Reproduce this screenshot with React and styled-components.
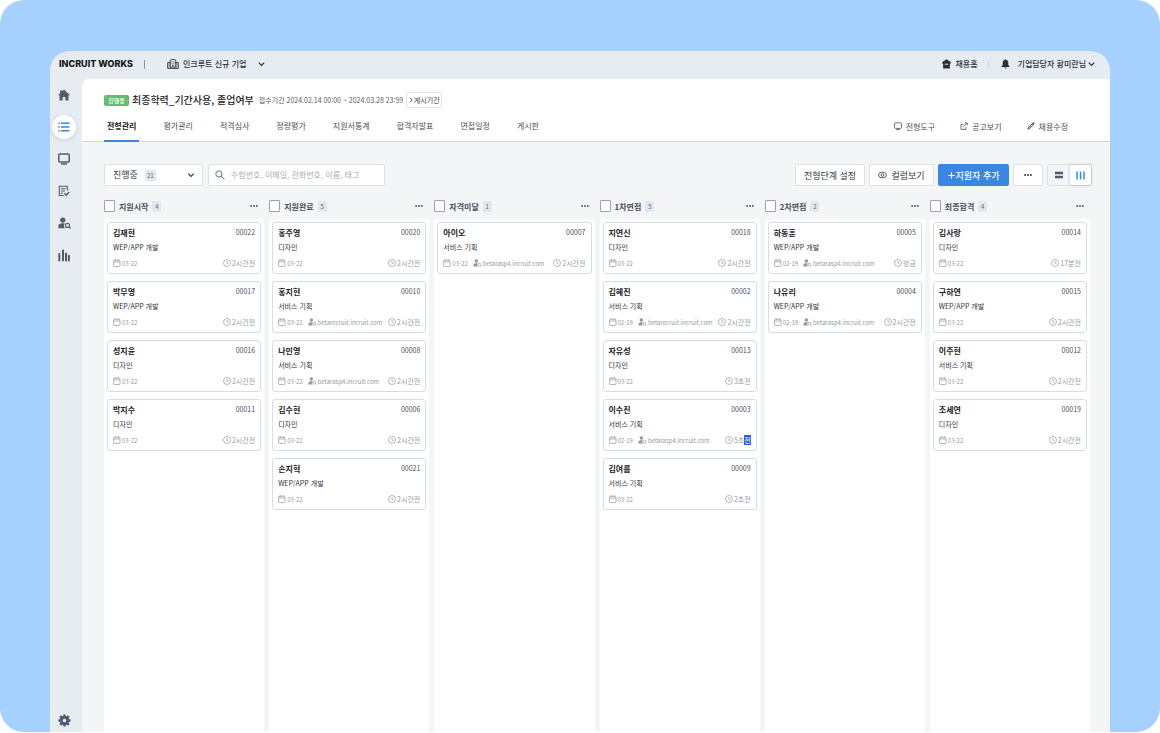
import React from "react";
import styled, { createGlobalStyle, css } from "styled-components";

const GlobalStyle = createGlobalStyle`
  *, *::before, *::after { box-sizing: border-box; }
  body {
    margin: 0;
    background: #fff;
    color: #333a45;
    font-family: "Noto Sans CJK KR", "Noto Sans", sans-serif;
    font-size: 8px;
  }
  button, input, select { font: inherit; color: inherit; margin: 0; }
  button { cursor: pointer; }
  a { color: inherit; text-decoration: none; }
  h1, h2, h3, p, ul { margin: 0; padding: 0; }
  ul { list-style: none; }
  svg { display: block; flex: none; }
`;

const Backdrop = styled.div`
  display: flex;
  min-height: calc(100vh - 1px);
  padding: 51px 50px 0;
  border-radius: 24px;
  background: #a6d1ff;
`;

const Window = styled.div`
  flex: 1;
  min-width: 0;
  display: flex;
  flex-direction: column;
  border-radius: 20px 20px 0 0;
  background: #e7ecf0;
  overflow: hidden;
`;

const TopBar = styled.header`
  display: flex;
  align-items: center;
  justify-content: space-between;
  height: 28px;
  padding: 0 15px 2px 9px;
`;

const TopGroup = styled.div`
  display: flex;
  align-items: center;
`;

const Logo = styled.a`
  min-width: 75px;
  font-family: Inter, sans-serif;
  font-size: 9px;
  font-weight: 800;
  line-height: 14px;
  white-space: nowrap;
  color: #15171b;
`;

const Divider = styled.span`
  width: 1px;
  height: 9px;
  margin: ${(p) => p.$margin};
  background: ${(p) => p.$color};
`;

const PlainButton = styled.button`
  display: flex;
  align-items: center;
  gap: ${(p) => p.$gap || 4}px;
  padding: 0;
  border: 0;
  background: none;
  font-size: 8px;
  font-weight: 500;
  line-height: 12px;
  white-space: nowrap;
  color: ${(p) => (p.$muted ? "#535a6e" : "#2b303a")};
`;

const TopLink = styled.a`
  display: flex;
  align-items: center;
  gap: 4px;
  font-weight: 500;
  line-height: 12px;
  color: #2b303a;
`;

const CompanyPicker = styled.div`
  display: flex;
  align-items: center;
  gap: 12px;
`;

const Account = styled.div`
  display: flex;
  align-items: center;
  gap: 2px;
`;

const Body = styled.div`
  flex: 1;
  display: flex;
`;

const Sidebar = styled.nav`
  flex: none;
  display: flex;
  flex-direction: column;
  gap: 8px;
  width: 32px;
  padding: 4px 0 0 2px;
  color: #535a6e;
`;

const SideLink = styled.a`
  display: flex;
  align-items: center;
  justify-content: center;
  width: 24px;
  height: 24px;
  border-radius: 50%;
  ${(p) => p.$active && css`
    background: #fff;
    color: #3a86e0;
    box-shadow: 0 1px 4px rgba(60, 80, 110, 0.2);
  `}
  ${(p) => p.$last && css`margin-top: auto;`}
`;

const Main = styled.main`
  flex: 1;
  min-width: 0;
  display: flex;
  flex-direction: column;
  border-top-left-radius: 8px;
  background: #f3f5f7;
  overflow: hidden;
`;

const PageHead = styled.div`
  padding: 13px 42px 0 22px;
  border-bottom: 1px solid #cfd8df;
  background: #fff;
`;

const TitleRow = styled.div`
  display: flex;
  align-items: center;
  height: 16px;
`;

const Status = styled.span`
  width: 25px;
  margin-right: 3px;
  border-radius: 2px;
  background: #66bb74;
  color: #fff;
  font-size: 6px;
  font-weight: 500;
  line-height: 11px;
  text-align: center;
`;

const Title = styled.h1`
  margin-right: 5px;
  font-size: 10px;
  font-weight: 500;
  line-height: 16px;
  white-space: nowrap;
  color: #1d2026;
`;

const Period = styled.span`
  margin-right: 3px;
  font-size: 7px;
  white-space: nowrap;
  color: #555b66;
`;

const PeriodButton = styled.button`
  display: flex;
  align-items: center;
  justify-content: center;
  gap: 1px;
  width: 36px;
  height: 16px;
  padding: 0;
  border: 1px solid #dfe4e8;
  border-radius: 3px;
  background: #fff;
  font-size: 7px;
  white-space: nowrap;
`;

const TabRow = styled.div`
  display: flex;
  justify-content: space-between;
  height: 33px;
`;

const Tabs = styled.nav`
  display: flex;
  gap: 21px;
`;

const Tab = styled.a`
  margin-bottom: -1px;
  padding: 10px 3px 0;
  border-bottom: 2px solid ${(p) => (p.$active ? "#3a86e0" : "transparent")};
  font-weight: ${(p) => (p.$active ? 700 : 400)};
  line-height: 16px;
  white-space: nowrap;
  color: ${(p) => (p.$active ? "#1d2026" : "#4b515c")};
`;

const Tools = styled.div`
  display: flex;
  gap: 25px;
`;

const ToolLink = styled.a`
  display: flex;
  align-items: center;
  gap: 4px;
  height: 16px;
  margin-top: 10px;
  white-space: nowrap;
  color: #4b515c;
`;

const Content = styled.div`
  flex: 1;
  display: flex;
  flex-direction: column;
  gap: 7px;
  padding: 22px 18px 0 22px;
`;

const Toolbar = styled.div`
  display: flex;
  justify-content: space-between;
`;

const ToolbarGroup = styled.div`
  display: flex;
  gap: ${(p) => p.$gap}px;
`;

const fieldBox = css`
  display: flex;
  align-items: center;
  height: 22px;
  border: 1px solid #dbe1e6;
  border-radius: 2px;
  background: #fff;
`;

const FilterBox = styled.label`
  ${fieldBox}
  width: 99px;
  padding: 0 7px 0 8px;
  svg { margin-left: auto; }
`;

const FilterSelect = styled.select`
  appearance: none;
  margin-right: 7px;
  padding: 0;
  border: 0;
  background: none;
  font-size: 9px;
  line-height: 16px;
`;

const SearchBox = styled.label`
  ${fieldBox}
  width: 177px;
  gap: 6px;
  padding: 0 6px;
  color: #6b7280;
`;

const SearchInput = styled.input`
  flex: 1;
  min-width: 0;
  padding: 0;
  border: 0;
  outline: 0;
  background: none;
  line-height: 16px;
  &::placeholder { color: #a9aeb6; opacity: 1; }
`;

const Count = styled.span`
  min-width: 9px;
  padding: 0 2px;
  border-radius: 1px;
  background: #e1e7ec;
  font-size: 6px;
  font-weight: 400;
  line-height: 11px;
  text-align: center;
  color: #5c6370;
`;

const ActionButton = styled.button`
  ${fieldBox}
  justify-content: center;
  gap: ${(p) => p.$gap || 0}px;
  width: ${(p) => p.$width}px;
  padding: 0;
  font-size: 9px;
  white-space: nowrap;
  ${(p) => p.$primary && css`
    border-color: #3a86e0;
    background: #3a86e0;
    color: #fff;
    font-weight: 500;
  `}
`;

const ViewSwitch = styled.div`
  ${fieldBox}
  width: 45px;
  background: #f3f5f7;
`;

const ViewButton = styled.button`
  flex: 1;
  display: flex;
  align-items: center;
  justify-content: center;
  height: 20px;
  padding: 0;
  border: 0;
  border-radius: 2px;
  background: ${(p) => (p.$active ? "#fff" : "none")};
  color: ${(p) => (p.$active ? "#3a86e0" : "#535a6e")};
  box-shadow: ${(p) => (p.$active ? "0 0 3px rgba(60, 70, 90, 0.35)" : "none")};
`;

const Board = styled.div`
  flex: 1;
  display: grid;
  grid-template-columns: repeat(6, minmax(0, 1fr));
  column-gap: 5px;
  padding-right: 2px;
`;

const Column = styled.section`
  display: flex;
  flex-direction: column;
`;

const ColumnHead = styled.div`
  display: flex;
  align-items: center;
  height: 26px;
  padding-right: 6px;
  color: #4b515e;
`;

const ColumnTitle = styled.label`
  display: flex;
  align-items: center;
  gap: 4px;
  margin-right: auto;
  font-weight: 700;
  white-space: nowrap;
`;

const Check = styled.input`
  appearance: none;
  width: 11px;
  height: 12px;
  border: 1px solid #9aa1b0;
  border-radius: 1px;
  background: #fff;
`;

const CardList = styled.ul`
  flex: 1;
  display: flex;
  flex-direction: column;
  gap: 7px;
  padding: 3px;
  border-radius: 2px 2px 0 0;
  background: #fff;
`;

const CardItem = styled.li`
  padding: 1px 5px;
  border: 1px solid #d6dde3;
  border-radius: 3px;
  background: #fff;
`;

const CardTop = styled.div`
  display: flex;
  align-items: center;
  justify-content: space-between;
  height: 16px;
  font-size: 7px;
  color: #4b515c;
`;

const Name = styled.h3`
  font-size: 8px;
  font-weight: 700;
  color: #1d2026;
`;

const Role = styled.p`
  font-size: 7px;
  line-height: 14px;
  color: #2b303a;
`;

const Meta = styled.div`
  display: flex;
  align-items: center;
  gap: 5px;
  height: 18px;
  white-space: nowrap;
  color: #94989f;
`;

const MetaPart = styled.span`
  display: flex;
  align-items: center;
  gap: 1px;
  font-size: ${(p) => p.$size}px;
  ${(p) => p.$end && css`margin-left: auto;`}
`;

const Selected = styled.mark`
  background: #2f62d9;
  color: #fff;
`;

function Svg({ w, h = w, box, children }) {
  return (
    <svg width={w} height={h} viewBox={box} fill="none" stroke="currentColor" aria-hidden="true">
      {children}
    </svg>
  );
}

const Chevron = ({ w = 7 }) => (
  <Svg w={w} h={6} box="0 0 7 6"><path d="M.8 1.6 3.5 4.3 6.2 1.6" strokeWidth="1.2" /></Svg>
);
const Dots = () => (
  <Svg w={8} h={4} box="0 0 8 4">
    <g fill="currentColor" stroke="none">
      <circle cx="1.1" cy="2" r="1" /><circle cx="4" cy="2" r="1" /><circle cx="6.9" cy="2" r="1" />
    </g>
  </Svg>
);
const HomeIcon = () => (
  <Svg w={12} box="0 0 12 12"><path d="M6 .4 12 6.2H10.5v5.4H7.3V8H4.7v3.6H1.5V6.2H0L2.2 4V1.3h1.6v1.2z" fill="currentColor" stroke="none" /></Svg>
);
const ListIcon = () => (
  <Svg w={12} h={10} box="0 0 12 10"><path d="M3 1.3h8.5M3 5h8.5M3 8.7h8.5" strokeWidth="1.5" /><path d="M.3 1.3h1.5M.3 5h1.5M.3 8.7h1.5" strokeWidth="1.5" /></Svg>
);
const MonitorIcon = () => (
  <Svg w={12} box="0 0 12 12"><rect x=".8" y=".9" width="10.4" height="8" rx="1" strokeWidth="1.5" /><path d="M3 11h6" strokeWidth="1.6" /></Svg>
);
const NoteIcon = () => (
  <Svg w={12} box="0 0 12 12"><path d="M9.3 5.4V1.2H1.3v9.3H5.6M3 3.8h4.5M3 6h3.8M3 8.2h2" strokeWidth="1.1" /><path d="m6.4 8.3 1.8 1.9 3-3.2" strokeWidth="1.4" /></Svg>
);
const PersonSearchIcon = ({ w = 13 }) => (
  <Svg w={w} h={w === 13 ? 12 : 8} box="0 0 13 12">
    <g fill="currentColor" stroke="none">
      <circle cx="4.8" cy="3" r="2.6" />
      <path d="M.4 11.2V8.8C.4 7.2 2.2 6.2 4.7 6.2c.9 0 1.6.1 2.2.4a3.4 3.4 0 0 0 .2 4.6z" />
    </g>
    <circle cx="9.5" cy="8.4" r="2" strokeWidth="1.1" />
    <path d="m10.9 9.8 1.7 1.7" strokeWidth="1.2" />
  </Svg>
);
const BarsIcon = () => (
  <Svg w={12} h={13} box="0 0 12 13"><path d="M1.3 5v6.5M5 1.4v10.1M8 4.4v7.1M10.9 6.8v4.7" strokeWidth="2" strokeLinecap="round" /></Svg>
);
const GearIcon = () => (
  <Svg w={13} box="0 0 13 13">
    <circle cx="6.5" cy="6.5" r="3.3" strokeWidth="3" />
    <path d="M6.5 .4v2M6.5 10.6v2M.4 6.5h2M10.6 6.5h2M2.2 2.2l1.4 1.4M9.4 9.4l1.4 1.4M2.2 10.8l1.4-1.4M9.4 3.6l1.4-1.4" strokeWidth="2.4" />
  </Svg>
);
const BuildingIcon = () => (
  <Svg w={12} h={10} box="0 0 12 10">
    <path d="M3.2 9.4V1.2c1.8-.9 3.8-.9 5.6 0v8.2M3.2 3.6H.7v5.8h10.6V3.6H8.8" strokeWidth=".9" />
    <path d="M4.5 3h1M6.6 3h1M4.5 4.8h1M6.6 4.8h1M1.6 5.2h1M1.6 7.2h1M9.4 5.2h1M9.4 7.2h1M5 9.4V6.8h2v2.6" strokeWidth=".9" />
  </Svg>
);
const StoreIcon = () => (
  <Svg w={9} h={10} box="0 0 9 10"><path d="M4.5.3 8.7 3v1.7H7.9v4.8H1.1V4.7H.3V3z" fill="currentColor" stroke="none" /><path d="M2.8 5.2h3.4" stroke="#e7ecf0" strokeWidth="1" /></Svg>
);
const BellIcon = () => (
  <Svg w={9} h={10} box="0 0 9 10"><path d="M4.5.3c.5 0 .8.3.8.7 1.3.3 2 1.4 2 2.8v2.3l1.2 1.4v.5h-8v-.5l1.2-1.4V3.8c0-1.4.7-2.5 2-2.8 0-.4.3-.7.8-.7zM3.5 8.5h2c0 .6-.4 1-1 1s-1-.4-1-1z" fill="currentColor" stroke="none" /></Svg>
);
const ScreenIcon = () => (
  <Svg w={8} box="0 0 8 8"><rect x=".5" y=".8" width="7" height="5.6" rx="1" strokeWidth=".8" /><path d="M2.3 7.5h3.4" strokeWidth=".9" /></Svg>
);
const ShareIcon = () => (
  <Svg w={8} box="0 0 8 8"><path d="M3.4 2.4H1v5h5V5M4.6.9h2.6v2.6M7 1.1 3.4 4.9" strokeWidth=".8" /></Svg>
);
const PencilIcon = () => (
  <Svg w={8} box="0 0 8 8"><path d="m.4 7.8.5-2.2L5.7.8c.5-.5 1.1-.4 1.5 0s.4 1 0 1.5L2.5 7.1z" fill="currentColor" stroke="none" /><path d="M1.8 6.3 5.6 2.4" stroke="#fff" strokeWidth=".7" /></Svg>
);
const SearchIcon = () => (
  <Svg w={10} box="0 0 10 10"><circle cx="3.9" cy="3.9" r="3.1" strokeWidth="1" /><path d="m6.2 6.2 3.3 3.3" strokeWidth="1" /></Svg>
);
const EyeIcon = () => (
  <Svg w={9} h={8} box="0 0 9 8"><ellipse cx="4.5" cy="4" rx="4" ry="2.9" strokeWidth=".8" /><circle cx="4.5" cy="4" r="1.4" strokeWidth=".8" /></Svg>
);
const PlusIcon = () => (
  <Svg w={7} box="0 0 7 7"><path d="M3.5.3v6.4M.3 3.5h6.4" strokeWidth="1.1" /></Svg>
);
const RowsIcon = () => (
  <Svg w={8} box="0 0 8 8"><path d="M0 2h8M0 6h8" strokeWidth="2.6" /></Svg>
);
const ColumnsIcon = () => (
  <Svg w={9} box="0 0 9 9"><path d="M1 .5v8M4.5.5v8M8 .5v8" strokeWidth="1.5" /></Svg>
);
const CalendarIcon = () => (
  <Svg w={8} box="0 0 8 8"><rect x=".6" y="1.3" width="6.4" height="6.2" rx=".6" strokeWidth=".7" /><path d="M.6 3h6.4M2.2 0v1.6M5.4 0v1.6" strokeWidth=".7" /></Svg>
);
const ClockIcon = () => (
  <Svg w={8} box="0 0 8 8"><circle cx="4" cy="4" r="3.5" strokeWidth=".7" /><path d="M4 2v2.3h1.6" strokeWidth=".7" /></Svg>
);
const AngleIcon = () => (
  <Svg w={4} h={6} box="0 0 4 6"><path d="M.7.7 3.2 3 .7 5.3" strokeWidth=".8" /></Svg>
);

const WEB = "WEP/APP 개발";
const DESIGN = "디자인";
const PLAN = "서비스 기획";
const BETA = "betarasp4.incruit.com";
const RECRUIT = "betarecruit.incruit.com";

const columns = [
  { title: "지원시작", cards: [
    ["김재현", "00022", WEB, "03-22", "", "2시간전"],
    ["박무영", "00017", WEB, "03-22", "", "2시간전"],
    ["성지윤", "00016", DESIGN, "03-22", "", "2시간전"],
    ["박지수", "00011", DESIGN, "03-22", "", "2시간전"],
  ] },
  { title: "지원완료", cards: [
    ["홍주영", "00020", DESIGN, "03-22", "", "2시간전"],
    ["홍지현", "00010", PLAN, "03-22", RECRUIT, "2시간전"],
    ["나민영", "00008", PLAN, "03-22", BETA, "2시간전"],
    ["김수현", "00006", DESIGN, "03-22", "", "2시간전"],
    ["손지혁", "00021", WEB, "03-22", "", "2시간전"],
  ] },
  { title: "자격미달", cards: [
    ["아이오", "00007", PLAN, "03-22", BETA, "2시간전"],
  ] },
  { title: "1차면접", cards: [
    ["지연신", "00018", DESIGN, "03-22", "", "2시간전"],
    ["김혜진", "00002", PLAN, "02-19", RECRUIT, "2시간전"],
    ["자유성", "00013", DESIGN, "03-22", "", "3초전"],
    ["이수진", "00003", PLAN, "02-19", BETA, <>5초<Selected>전</Selected></>],
    ["김여름", "00009", PLAN, "03-22", "", "2초전"],
  ] },
  { title: "2차면접", cards: [
    ["하동훈", "00005", WEB, "02-19", BETA, "방금"],
    ["나유리", "00004", WEB, "02-19", BETA, "2시간전"],
  ] },
  { title: "최종합격", cards: [
    ["김사랑", "00014", DESIGN, "03-22", "", "17분전"],
    ["구하연", "00015", WEB, "03-22", "", "2시간전"],
    ["이주현", "00012", PLAN, "03-22", "", "2시간전"],
    ["조세연", "00019", DESIGN, "03-22", "", "2시간전"],
  ] },
];

const tabs = ["전형관리", "평가관리", "적격심사", "정량평가", "지원서통계", "합격자발표", "면접일정", "게시판"];

const sideItems = [
  ["홈", HomeIcon],
  ["채용 목록", ListIcon],
  ["화면", MonitorIcon],
  ["평가", NoteIcon],
  ["인재 검색", PersonSearchIcon],
  ["통계", BarsIcon],
];

function Card({ data }) {
  const [name, number, role, date, site, time] = data;
  return (
    <CardItem>
      <CardTop><Name>{name}</Name><span>{number}</span></CardTop>
      <Role>{role}</Role>
      <Meta>
        <MetaPart $size={6}><CalendarIcon />{date}</MetaPart>
        {site && <MetaPart $size={6}><PersonSearchIcon w={9} />{site}</MetaPart>}
        <MetaPart $size={7} $end><ClockIcon /><span>{time}</span></MetaPart>
      </Meta>
    </CardItem>
  );
}

export default function App() {
  return (
    <>
      <GlobalStyle />
      <Backdrop lang="ko">
        <Window>
          <TopBar>
            <TopGroup>
              <Logo href="#">INCRUIT WORKS</Logo>
              <Divider $margin="0 22px 0 10px" $color="#8d95a0" />
              <CompanyPicker>
                <PlainButton>
                  <BuildingIcon />
                  <span>인크루트 신규 기업</span>
                </PlainButton>
                <PlainButton aria-label="기업 선택"><Chevron /></PlainButton>
              </CompanyPicker>
            </TopGroup>
            <TopGroup>
              <TopLink href="#"><StoreIcon />채용홈</TopLink>
              <Divider $margin="0 12px 0 10px" $color="#d3d9df" />
              <Account>
                <PlainButton $gap={8}><BellIcon /><span>기업담당자 황미란님</span></PlainButton>
                <PlainButton aria-label="계정 메뉴"><Chevron /></PlainButton>
              </Account>
            </TopGroup>
          </TopBar>
          <Body>
            <Sidebar>
              {sideItems.map(([label, Icon], i) => (
                <SideLink key={label} href="#" aria-label={label} $active={i === 1}><Icon /></SideLink>
              ))}
              <SideLink href="#" aria-label="설정" $last><GearIcon /></SideLink>
            </Sidebar>
            <Main>
              <PageHead>
                <TitleRow>
                  <Status>진행중</Status>
                  <Title>최종학력_기간사용, 졸업여부</Title>
                  <Period>접수기간 2024.02.14 00:00 ~ 2024.03.28 23:59</Period>
                  <PeriodButton><AngleIcon />게시기간</PeriodButton>
                </TitleRow>
                <TabRow>
                  <Tabs>
                    {tabs.map((tab, i) => <Tab key={tab} href="#" $active={i === 0}>{tab}</Tab>)}
                  </Tabs>
                  <Tools>
                    <ToolLink href="#"><ScreenIcon />전형도구</ToolLink>
                    <ToolLink href="#"><ShareIcon />공고보기</ToolLink>
                    <ToolLink href="#"><PencilIcon />채용수정</ToolLink>
                  </Tools>
                </TabRow>
              </PageHead>
              <Content>
                <Toolbar>
                  <ToolbarGroup $gap={5}>
                    <FilterBox>
                      <FilterSelect aria-label="진행 상태"><option>진행중</option></FilterSelect>
                      <Count>21</Count>
                      <Chevron w={8} />
                    </FilterBox>
                    <SearchBox>
                      <SearchIcon />
                      <SearchInput type="search" aria-label="지원자 검색" placeholder="수험번호, 이메일, 전화번호, 이름, 태그" />
                    </SearchBox>
                  </ToolbarGroup>
                  <ToolbarGroup $gap={4}>
                    <ActionButton $width={70}>전형단계 설정</ActionButton>
                    <ActionButton $width={65} $gap={4}><EyeIcon />컬럼보기</ActionButton>
                    <ActionButton $width={71} $gap={1} $primary><PlusIcon />지원자 추가</ActionButton>
                    <ActionButton $width={30} aria-label="더보기"><Dots /></ActionButton>
                    <ViewSwitch>
                      <ViewButton aria-label="목록 보기"><RowsIcon /></ViewButton>
                      <ViewButton aria-label="칸반 보기" $active><ColumnsIcon /></ViewButton>
                    </ViewSwitch>
                  </ToolbarGroup>
                </Toolbar>
                <Board>
                  {columns.map((column) => (
                    <Column key={column.title}>
                      <ColumnHead>
                        <ColumnTitle>
                          <Check type="checkbox" />
                          {column.title}
                          <Count>{column.cards.length}</Count>
                        </ColumnTitle>
                        <PlainButton $muted aria-label={`${column.title} 더보기`}><Dots /></PlainButton>
                      </ColumnHead>
                      <CardList>
                        {column.cards.map((card) => <Card key={card[1]} data={card} />)}
                      </CardList>
                    </Column>
                  ))}
                </Board>
              </Content>
            </Main>
          </Body>
        </Window>
      </Backdrop>
    </>
  );
}
